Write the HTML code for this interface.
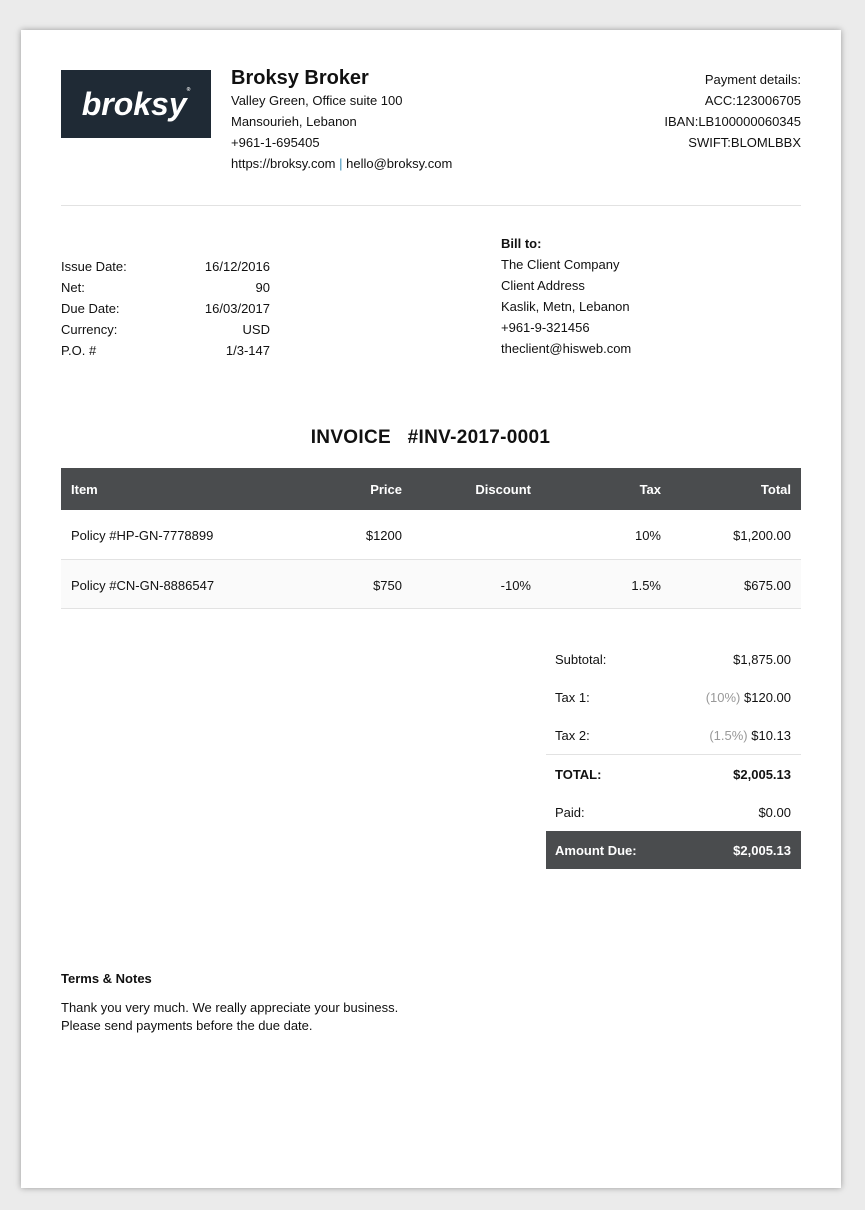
<!DOCTYPE html>
<html><head><meta charset="utf-8"><style>
*{margin:0;padding:0;box-sizing:border-box}
body{width:865px;height:1210px;background:#ebebeb;font-family:"Liberation Sans",sans-serif;font-size:13px;color:#111;position:relative;overflow:hidden}
.page{position:absolute;left:21px;top:30px;width:820px;height:1158px;background:#fff;box-shadow:0 0 6px rgba(0,0,0,.35)}
.a{position:absolute;white-space:nowrap}
.r{text-align:right}
.b{font-weight:bold}
</style></head><body>
<div class="page"></div>
<div class="a" style="left:61px;top:70px;width:150px;height:68px;background:#1f2a35;color:#fff;font-size:32px;font-weight:bold;font-style:italic;line-height:68px;text-align:center">broksy<span style="font-size:5px;vertical-align:top;line-height:40px">®</span></div>
<div class="a b" style="left:231px;top:67px;font-size:20px">Broksy Broker</div>
<div class="a" style="left:231px;top:90px;line-height:21px">Valley Green, Office suite 100<br>Mansourieh, Lebanon<br>+961-1-695405<br>https://broksy.com <span style="color:#3a8fb7">|</span> hello@broksy.com</div>
<div class="a r" style="right:64px;top:69px;line-height:21px">Payment details:<br>ACC:123006705<br>IBAN:LB100000060345<br>SWIFT:BLOMLBBX</div>
<div class="a" style="left:61px;top:205px;width:740px;height:1px;background:#e2e2e2"></div>
<div class="a" style="left:61px;top:256px;line-height:21px">Issue Date:<br>Net:<br>Due Date:<br>Currency:<br>P.O. #</div>
<div class="a r" style="left:170px;width:100px;top:256px;line-height:21px">16/12/2016<br>90<br>16/03/2017<br>USD<br>1/3-147</div>
<div class="a b" style="left:501px;top:236px">Bill to:</div>
<div class="a" style="left:501px;top:254px;line-height:21px">The Client Company<br>Client Address<br>Kaslik, Metn, Lebanon<br>+961-9-321456<br>theclient@hisweb.com</div>
<div class="a b" style="left:0;width:861px;text-align:center;top:427px;font-size:19px;letter-spacing:.3px">INVOICE &nbsp;&nbsp;#INV-2017-0001</div>
<div class="a" style="left:61px;top:468px;width:740px;height:42px;background:#4a4c4e"></div>
<div class="a b" style="left:71px;top:482px;color:#fff">Item</div>
<div class="a b r" style="left:300px;width:102px;top:482px;color:#fff">Price</div>
<div class="a b r" style="left:430px;width:101px;top:482px;color:#fff">Discount</div>
<div class="a b r" style="left:560px;width:101px;top:482px;color:#fff">Tax</div>
<div class="a b r" style="left:690px;width:101px;top:482px;color:#fff">Total</div>
<div class="a" style="left:61px;top:559px;width:740px;height:1px;background:#e2e2e2"></div>
<div class="a" style="left:61px;top:560px;width:740px;height:49px;background:#fafafa;border-bottom:1px solid #e2e2e2"></div>
<div class="a" style="left:71px;top:528px">Policy #HP-GN-7778899</div>
<div class="a r" style="left:300px;width:102px;top:528px">$1200</div>
<div class="a r" style="left:560px;width:101px;top:528px">10%</div>
<div class="a r" style="left:690px;width:101px;top:528px">$1,200.00</div>
<div class="a" style="left:71px;top:578px">Policy #CN-GN-8886547</div>
<div class="a r" style="left:300px;width:102px;top:578px">$750</div>
<div class="a r" style="left:430px;width:101px;top:578px">-10%</div>
<div class="a r" style="left:560px;width:101px;top:578px">1.5%</div>
<div class="a r" style="left:690px;width:101px;top:578px">$675.00</div>
<div class="a" style="left:555px;top:652px">Subtotal:</div><div class="a r" style="left:650px;width:141px;top:652px">$1,875.00</div>
<div class="a" style="left:555px;top:690px">Tax 1:</div><div class="a r" style="left:650px;width:141px;top:690px"><span style="color:#999">(10%)</span> $120.00</div>
<div class="a" style="left:555px;top:728px">Tax 2:</div><div class="a r" style="left:650px;width:141px;top:728px"><span style="color:#999">(1.5%)</span> $10.13</div>
<div class="a" style="left:546px;top:754px;width:255px;height:1px;background:#e2e2e2"></div>
<div class="a b" style="left:555px;top:767px">TOTAL:</div><div class="a b r" style="left:650px;width:141px;top:767px">$2,005.13</div>
<div class="a" style="left:555px;top:805px">Paid:</div><div class="a r" style="left:650px;width:141px;top:805px">$0.00</div>
<div class="a" style="left:546px;top:831px;width:255px;height:38px;background:#4a4c4e"></div>
<div class="a b" style="left:555px;top:843px;color:#fff">Amount Due:</div><div class="a b r" style="left:650px;width:141px;top:843px;color:#fff">$2,005.13</div>
<div class="a b" style="left:61px;top:971px">Terms &amp; Notes</div>
<div class="a" style="left:61px;top:999px;line-height:18px">Thank you very much. We really appreciate your business.<br>Please send payments before the due date.</div>
</body></html>
